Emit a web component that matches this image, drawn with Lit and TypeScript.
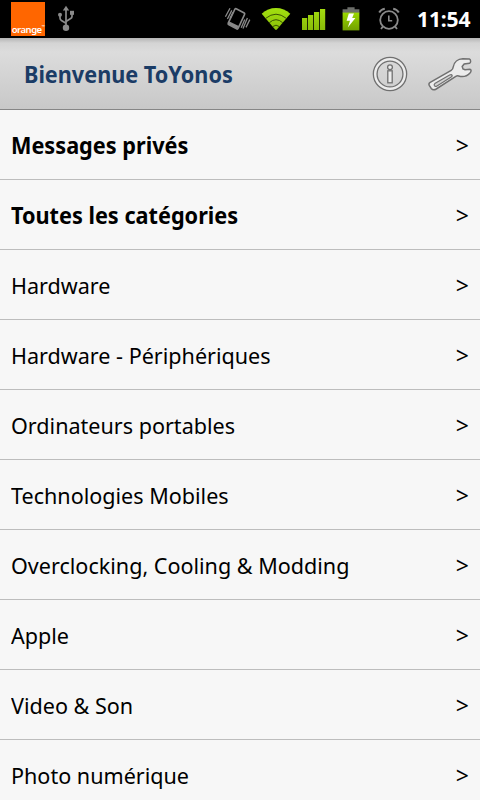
import { LitElement, html, svg, css } from "lit";
import { customElement, property } from "lit/decorators.js";
import { classMap } from "lit/directives/class-map.js";

interface Category {
  name: string;
  bold?: boolean;
}

const CATEGORIES: Category[] = [
  { name: "Messages privés", bold: true },
  { name: "Toutes les catégories", bold: true },
  { name: "Hardware" },
  { name: "Hardware - Périphériques" },
  { name: "Ordinateurs portables" },
  { name: "Technologies Mobiles" },
  { name: "Overclocking, Cooling & Modding" },
  { name: "Apple" },
  { name: "Video & Son" },
  { name: "Photo numérique" },
];

const WRENCH =
  "M2.2 26.4 L23.2 14.4 C24.6 13.6 25 12.8 25.2 11 C26 6 30 3 34.8 2.8 L41.4 3 C43 3.4 43 7 41.6 7.2 L36.2 8 L34.2 10.4 L35 13 L37 13.8 L42 13.2 C43.6 13.4 43.2 16 42 17 C39 20.2 34.4 21.2 30.6 20 C29.4 19.6 28.8 19.8 27.8 20.4 L8.2 33 C6.2 34.2 4.4 33.8 3.2 32.4 L1.4 29.6 C0.6 28.2 0.8 27.2 2.2 26.4 Z";

@customElement("status-bar")
export class StatusBar extends LitElement {
  @property() public time = "";

  private _renderVibrate() {
    return html`
      <svg class="vibrate" width="28" height="26" viewBox="0 0 28 26">
        <g fill="none" stroke="#8a8a8a" stroke-width="1.6">
          <path
            d="M12.2 2.8 L20.2 7 Q21 7.6 20.6 8.4 L14.2 22.2 Q13.6 23.4 12.6 22.9 L4.6 18.6 Q3.8 18.1 4.2 17.2 L10.8 3.4 Q11.4 2.4 12.2 2.8 Z"
          />
          <path d="M7.8 4.4 L3.4 13 M6 2.2 L1.4 10.8 M9 6.4 L6 12.4" stroke-width="1.3" />
          <path d="M20.8 13.6 L17.2 21.8 M23.4 12 L19 22.4 M25.8 13.6 L22 21.4" stroke-width="1.3" />
        </g>
        <path d="M5.4 15.4 L14.8 20 L13 23 L4.2 18.2 Z" fill="#8a8a8a" />
      </svg>
    `;
  }

  private _renderSignal() {
    const bars = [
      [1, 12],
      [7, 9],
      [13, 6],
      [19, 3],
    ];
    return html`
      <svg class="signal" width="26" height="26" viewBox="0 0 26 26">
        <defs>
          <linearGradient id="bars" x1="0" y1="0" x2="0" y2="26" gradientUnits="userSpaceOnUse">
            <stop offset="0" stop-color="#a6e010" />
            <stop offset="1" stop-color="#86b808" />
          </linearGradient>
        </defs>
        ${bars.map(
          ([x, y]) =>
            svg`<rect x=${x} y=${y} width="5.2" height=${24 - y} fill="url(#bars)" />`
        )}
      </svg>
    `;
  }

  protected render() {
    return html`
      <div class="carrier"><span>orange</span><span class="mark">™</span></div>
      <svg class="usb" width="18" height="28" viewBox="0 0 18 28">
        <g fill="none" stroke="#8a8a8a" stroke-width="1.7">
          <path d="M9 4 V22" />
          <path d="M3 10.5 V13 Q3 14.6 4.4 15.4 L9 18.2" />
          <path d="M15 8 V11.4 Q15 12.8 13.6 13.6 L9 16.4" />
        </g>
        <path d="M9 0.8 L12.2 5.6 H5.8 Z" fill="#8a8a8a" />
        <circle cx="9" cy="22.8" r="3.2" fill="#8a8a8a" />
        <circle cx="3" cy="9.8" r="2" fill="#8a8a8a" />
        <rect x="13" y="5.8" width="4" height="4" fill="#8a8a8a" />
      </svg>
      <div class="spacer"></div>
      ${this._renderVibrate()}
      <svg class="wifi" width="30" height="26" viewBox="0 0 30 26">
        <defs>
          <linearGradient id="wave" x1="0" y1="0" x2="0" y2="1">
            <stop offset="0" stop-color="#a2e010" />
            <stop offset="1" stop-color="#8cc008" />
          </linearGradient>
        </defs>
        <path
          d="M0.7 7.8 Q6.8 2 15 2 Q23.2 2 29.3 7.8 L15.9 23.6 Q15 24.4 14.1 23.6 Z"
          fill="url(#wave)"
        />
        <g fill="none" stroke="#2c4400" stroke-width="0.9">
          <path d="M4.6 12.4 Q15 4 25.4 12.4" />
          <path d="M8.2 16.8 Q15 10.6 21.8 16.8" />
          <path d="M11.6 20.6 Q15 17.8 18.4 20.6" />
        </g>
      </svg>
      ${this._renderSignal()}
      <svg class="battery" width="18" height="26" viewBox="0 0 18 26">
        <defs>
          <linearGradient id="cell" x1="0" y1="0" x2="0" y2="1">
            <stop offset="0" stop-color="#9ad800" />
            <stop offset="1" stop-color="#72a000" />
          </linearGradient>
        </defs>
        <path d="M5.4 1.2 H12.6 V3.2 H17.4 V7 H0.6 V3.2 H5.4 Z" fill="#6c6e6a" />
        <rect x="0.6" y="6.6" width="16.8" height="17.8" fill="url(#cell)" />
        <path d="M6.8 7.4 H12 L10.2 12 H13.4 L5.8 21.6 L8 14.8 H4.6 Z" fill="#fff" />
      </svg>
      <svg class="alarm" width="22" height="26" viewBox="0 0 22 26">
        <g fill="none" stroke="#8a8a8a" stroke-width="1.8">
          <circle cx="11" cy="14" r="8.8" />
          <path d="M10.8 9.6 V14.8 H14.2" stroke-width="1.6" />
          <path d="M1.2 6.6 Q3 3.4 6.8 2.8" stroke-width="2" />
          <path d="M20.8 6.6 Q19 3.4 15.2 2.8" stroke-width="2" />
          <path d="M5 20.4 L3 23 M17 20.4 L19 23" />
        </g>
      </svg>
      <span class="time">${this.time}</span>
    `;
  }

  static styles = css`
    :host {
      display: flex;
      flex: none;
      align-items: center;
      height: 38px;
      padding: 0 10px 0 11px;
      box-sizing: border-box;
      background: #000;
      color: #fff;
    }

    svg {
      flex: none;
    }

    .carrier {
      display: flex;
      align-items: flex-end;
      justify-content: center;
      width: 34px;
      height: 34px;
      background: #ff6600;
      font-size: 9.5px;
      font-weight: 600;
      line-height: 12px;
      letter-spacing: -0.5px;
    }

    .mark {
      font-size: 4px;
      line-height: 18px;
    }

    .usb {
      margin-left: 12px;
    }

    .spacer {
      flex: 1;
    }

    .wifi {
      margin-left: 9px;
    }

    .signal {
      margin-left: 10px;
    }

    .battery {
      margin-left: 15px;
    }

    .alarm {
      margin-left: 18px;
    }

    .time {
      width: 53px;
      margin-left: 17px;
      font-size: 21px;
      font-weight: 700;
      line-height: 38px;
      letter-spacing: -0.1px;
      white-space: nowrap;
    }
  `;
}

@customElement("title-bar")
export class TitleBar extends LitElement {
  @property() public heading = "";

  protected render() {
    return html`
      <h1>${this.heading}</h1>
      <svg width="36" height="36" viewBox="0 0 36 36">
        <circle cx="18" cy="18" r="14.8" fill="none" stroke="#707070" stroke-width="5" />
        <circle cx="18" cy="18" r="14.8" fill="none" stroke="#ececec" stroke-width="2.4" />
        <g fill="#ececec" stroke="#707070" stroke-width="1.3">
          <circle cx="18" cy="11.2" r="2.4" />
          <rect x="15.8" y="14.8" width="4.4" height="12" />
        </g>
      </svg>
      <svg class="wrench" width="44" height="36" viewBox="0 0 44 36">
        <path d=${WRENCH} fill="#ececec" stroke="#707070" stroke-width="1.5" />
        <path
          d="M6.8 27.6 L21.6 19 Q23.6 18.2 24.2 19.4 Q24.4 20.2 23.2 21 L8.6 30.2 Q7.2 30.8 6.4 29.6 Q5.8 28.4 6.8 27.6 Z"
          fill="#d2d2d2"
          stroke="#707070"
          stroke-width="1.2"
        />
      </svg>
    `;
  }

  static styles = css`
    :host {
      display: flex;
      flex: none;
      align-items: center;
      height: 72px;
      padding: 0 8px 0 24px;
      box-sizing: border-box;
      border-bottom: 1px solid #868686;
      background: linear-gradient(#b4b4b4, #d4d4d4 5px, #dcdcdc 14px, #c8c8c8);
    }

    h1 {
      flex: 1;
      margin: 0;
      color: #1b3c66;
      font-size: 24px;
      font-weight: 700;
      line-height: 32px;
      white-space: nowrap;
      transform: scaleX(0.902);
      transform-origin: left;
    }

    svg {
      flex: none;
    }

    .wrench {
      margin-left: 20px;
    }
  `;
}

@customElement("app-root")
export class AppRoot extends LitElement {
  protected render() {
    return html`
      <status-bar time="11:54"></status-bar>
      <title-bar heading="Bienvenue ToYonos"></title-bar>
      <ul>
        ${CATEGORIES.map(
          (category) => html`
            <li>
              <span class=${classMap({ name: true, bold: !!category.bold })}
                >${category.name}</span
              >
              <span class="arrow">&gt;</span>
            </li>
          `
        )}
      </ul>
    `;
  }

  static styles = css`
    :host {
      display: flex;
      flex-direction: column;
      width: 480px;
      height: 800px;
      overflow: hidden;
      background: #f7f7f7;
      color: #000;
      font-family: "Noto Sans", "Open Sans", sans-serif;
    }

    ul {
      margin: 0;
      padding: 0;
      list-style: none;
    }

    li {
      display: flex;
      align-items: center;
      justify-content: space-between;
      height: 70px;
      padding: 1px 11px 0;
      box-sizing: border-box;
      border-bottom: 1px solid #bdbdbd;
      font-size: 22px;
      line-height: 30px;
      white-space: nowrap;
    }

    .name {
      transform: scaleX(0.98);
      transform-origin: left;
    }

    .name.bold {
      font-size: 24px;
      font-weight: 700;
      transform: scaleX(0.903);
    }

    .arrow {
      padding-bottom: 1px;
      font-size: 23px;
    }
  `;
}
